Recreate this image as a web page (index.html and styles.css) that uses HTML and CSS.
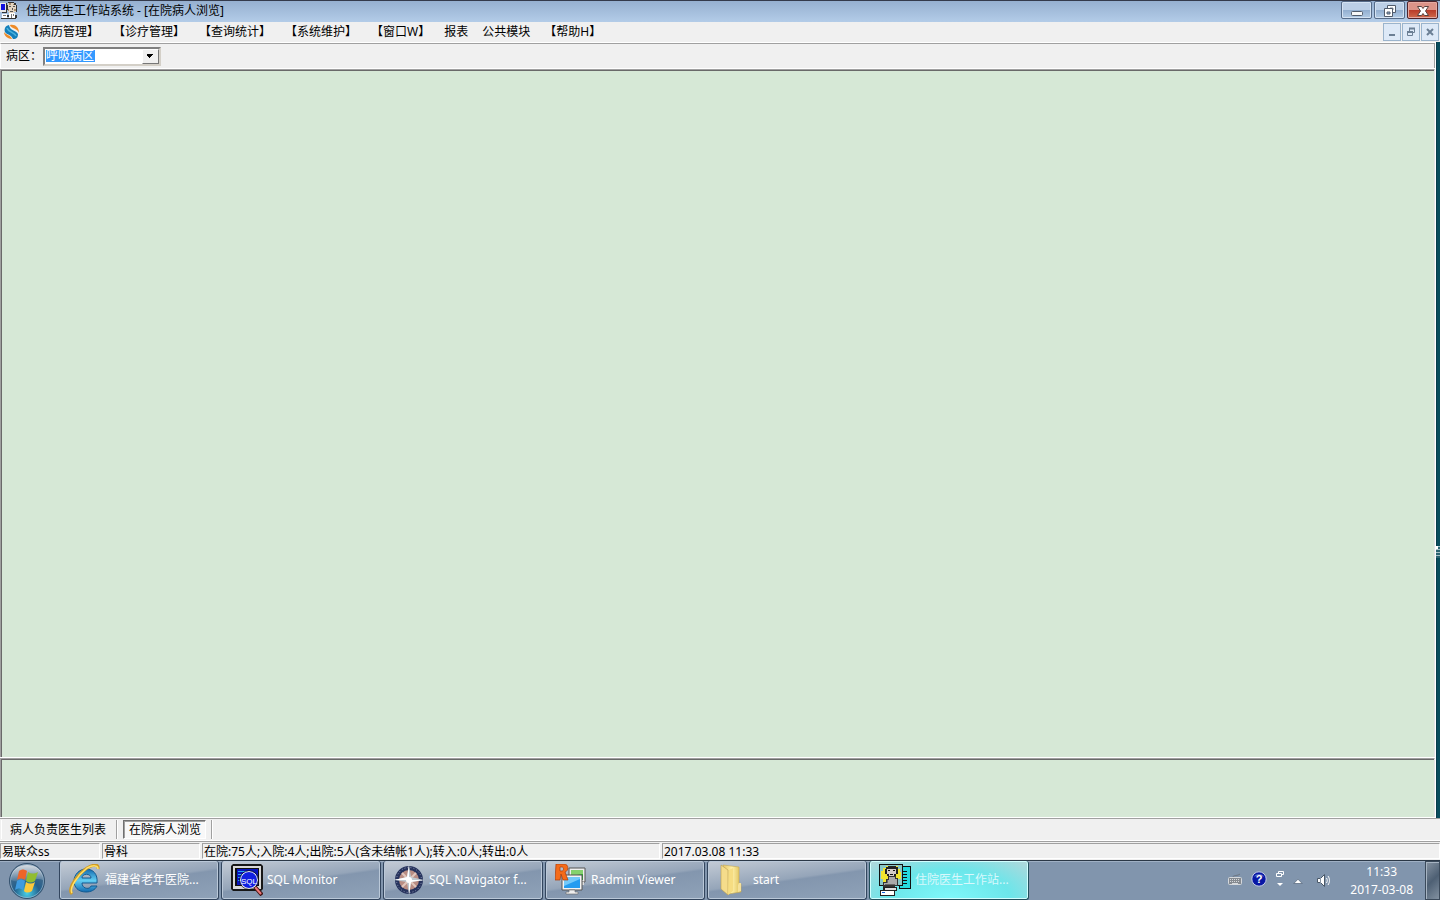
FILE: index.html
```html
<!DOCTYPE html>
<html lang="zh-CN">
<head>
<meta charset="utf-8">
<title>住院医生工作站系统</title>
<link rel="stylesheet" href="styles.css">
</head>
<body>
<header class="titlebar">
  <svg class="app-icon" width="18" height="18" viewBox="0 0 18 18" shape-rendering="crispEdges">
    <path fill="#e8e8e8" d="M0 1h7v9H0z"/><path fill="#1010e0" d="M1 2h4v6H1z"/>
    <path fill="#333" d="M6 1h1v9H6zM2 10h5v1H2zM8 0h6v1H8zM14 1h2v2h-2zM16 3h1v7h-1zM7 3h1v5H7zM1 16h15v1H1zM7 13h2v2H7zM15 13h2v3h-2z"/>
    <path fill="#e3d5c2" d="M8 1h6v2h2v7h-2v3H9v-3H8z"/><path fill="#555" d="M9 4h2v1H9zM13 4h2v1h-2zM12 6h1v2h-1zM10 9h3v1h-3z"/>
    <path fill="#a88d6c" d="M9 1h2v2H9zM13 2h1v1h-1zM8 7h1v2H8zM14 7h2v2h-2z"/>
    <path fill="#fff" d="M2 12h5v4H2zM9 11h6v5H9z"/><path fill="#777" d="M3 13h3v1H3zM11 12h1v4h-1zM13 12h1v2h-1z"/>
  </svg>
  <h1 class="title">住院医生工作站系统 - [在院病人浏览]</h1>
  <div class="window-buttons">
    <button class="win-btn" aria-label="最小化"><svg width="29" height="15" viewBox="0 0 29 15"><rect x="9.500" y="8.500" width="11" height="4" rx="1" fill="#f8f8f8" stroke="#525c6b"/></svg></button>
    <button class="win-btn" aria-label="还原"><svg width="29" height="15" viewBox="0 0 29 15"><path d="M12.500 2.500h8v7h-8z" fill="#fff" stroke="#525c6b"/><path d="M15 5h3v2h-3z" fill="#8fadd0" stroke="#525c6b" stroke-width=".7"/><path d="M9.500 5.500h8v8h-8z" fill="#fff" stroke="#525c6b"/><path d="M12 9h3v2h-3z" fill="#8fadd0" stroke="#525c6b"/></svg></button>
    <button class="win-btn win-close" aria-label="关闭"><svg width="29" height="15" viewBox="0 0 29 15"><path d="M9.500 3.500h4l1.500 2 1.500-2h4l-3 4.500 3 4.500h-4l-1.500-2-1.500 2h-4l3-4.500z" fill="#fff" stroke="#57423f"/></svg></button>
  </div>
</header>
<div class="menubar">
  <svg class="menu-icon" width="16" height="16" viewBox="0 0 16 16">
    <path d="M5 1C1 2 0 5 1 8c2 3 6 2 8 7 4 0 5-2 5-5-2-4-8-3-9-9z" fill="#147fba"/>
    <path d="M6 1c5-1 9 2 9 8-1-3-4-4-6-5C7 3 6 2 6 1z" fill="#ee8b27"/>
    <path d="M0 8c2 3 7 3 8 7-4 0-8-3-8-7z" fill="#ee8b27"/><path d="M3 4c1 4 7 4 9 8" stroke="#4bb2dc" stroke-width="1.500" fill="none"/>
  </svg>
  <nav class="menu">
    <button>【病历管理】</button><button>【诊疗管理】</button><button>【查询统计】</button><button>【系统维护】</button><button>【窗口W】</button><button>报表</button><button>公共模块</button><button>【帮助H】</button>
  </nav>
  <div class="child-buttons">
    <button aria-label="最小化子窗口"><svg width="16" height="16" viewBox="0 0 16 16"><path d="M5 10h6v2H5z" fill="#6b7f94"/></svg></button>
    <button aria-label="还原子窗口"><svg width="16" height="16" viewBox="0 0 16 16" fill="none" stroke="#6b7f94"><path d="M6.500 7V4.500h5v4H10"/><path d="M6 4.500h6M4 8h6" stroke-width="2"/><path d="M4.500 7.500h5v4h-5z"/></svg></button>
    <button aria-label="关闭子窗口"><svg width="16" height="16" viewBox="0 0 16 16"><path d="M5 5l6 6M11 5l-6 6" stroke="#6b7f94" stroke-width="2"/></svg></button>
  </div>
</div>
<div class="workspace">
  <main class="child-window">
    <div class="toolbar">
      <label for="ward">病区：</label>
      <div class="combo">
        <select id="ward"><option>呼吸病区</option></select>
        <svg class="combo-arrow" width="17" height="15" viewBox="0 0 17 15" shape-rendering="crispEdges"><path d="M4 5h7v1H4zM5 6h5v1H5zM6 7h3v1H6zM7 8h1v1H7z"/></svg>
      </div>
    </div>
    <section class="pane patients"></section>
    <section class="pane detail"></section>
  </main>
  <aside class="desktop-edge"><span class="edge-mark"></span></aside>
</div>
<div class="tabs">
  <div class="tab-slot"><button class="tab">病人负责医生列表</button></div>
  <div class="tab-slot"><button class="tab tab-active">在院病人浏览</button></div>
</div>
<footer class="statusbar">
  <span class="cell cell-small">易联众ss</span>
  <span class="cell cell-small">骨科</span>
  <span class="cell cell-wide">在院:75人;入院:4人;出院:5人(含未结帐1人);转入:0人;转出:0人</span>
  <span class="cell cell-rest">2017.03.08 11:33</span>
</footer>
<div class="taskbar">
  <button class="start" aria-label="开始">
    <svg width="38" height="38" viewBox="0 0 38 38">
      <defs>
        <radialGradient id="orb" cx=".5" cy=".85" r=".8"><stop offset="0" stop-color="#48d0e8"/><stop offset=".45" stop-color="#23608c"/><stop offset="1" stop-color="#58718c"/></radialGradient>
        <linearGradient id="shine" x2="0" y2="1"><stop stop-color="#fff" stop-opacity=".75"/><stop offset="1" stop-color="#fff" stop-opacity=".1"/></linearGradient>
      </defs>
      <circle cx="19" cy="19" r="17.500" fill="url(#orb)" stroke="#34516d"/>
      <circle cx="19" cy="19" r="16.500" fill="none" stroke="#a5c3d8" opacity=".6"/>
      <path d="M3 18C3 8 10 3 19 3s16 5 16 15c-9-4-20 5-32 0z" fill="url(#shine)"/>
      <path d="M11 9c3-2 5-2 8 0l-2 9c-3-2-5-2-8 0z" fill="#ee6529"/>
      <path d="M20 10c3 2 6 2 10 0l-3 9c-3 2-6 2-9 0z" fill="#91bd2f"/>
      <path d="M9 19c3-2 5-2 8 0l-2 9c-3-2-5-2-8 0z" fill="#3f9be0"/>
      <path d="M18 20c3 2 6 2 9 0l-3 9c-3 2-6 2-8 0z" fill="#fcc93a"/>
    </svg>
  </button>
  <div class="tasks">
    <button class="task">
      <svg width="32" height="32" viewBox="0 0 32 32">
        <defs><linearGradient id="ie" x2="0" y2="1"><stop stop-color="#1268ae"/><stop offset=".5" stop-color="#62cdf2"/><stop offset="1" stop-color="#126bb1"/></linearGradient></defs>
        <path fill-rule="evenodd" fill="url(#ie)" stroke="#145b91" d="M28 19H13c0 6 8 7 9 3h6c-2 4-6 6-11 6C9 28 5 23 5 17S10 5 17 5s12 5 11 14zM13 14h9c0-5-9-5-9 0z"/>
        <path d="M3 30C-2 25 8 11 18 4c7-4 12-4 11 1" fill="none" stroke="#d19b22" stroke-width="3"/><path d="M3 29C0 24 9 11 18 4c6-3 11-3 11 1" fill="none" stroke="#ffe16b" stroke-width="1.500"/>
      </svg><span>福建省老年医院...</span>
    </button>
    <button class="task">
      <svg width="32" height="32" viewBox="0 0 32 32">
        <path d="M2 0h28l2 2v23l-2 2H2l-2-2V2z" fill="#171717"/><path d="M2 2h28v23H2z" fill="#d8d8d8"/><path d="M4 4h24v18H4z" fill="#111"/><path d="M6 5h21v16H6z" fill="#0613bd"/>
        <path d="M7 7.500h8M7 10.500h7M7 13.500h5M7 16.500h3" stroke="#28a3f2"/><path d="M24 23l7 8" stroke="#431313" stroke-width="4"/><path d="M24 23l6 7" stroke="#ec7979" stroke-width="2"/>
        <circle cx="18" cy="16" r="8.500" fill="#101fe0" stroke="#fff"/><circle cx="18" cy="16" r="9.400" fill="none" stroke="#111" stroke-width=".7"/>
        <text x="18" y="20" class="sql-mark">SQL</text>
      </svg><span>SQL Monitor</span>
    </button>
    <button class="task">
      <svg width="32" height="32" viewBox="0 0 32 32">
        <circle cx="16" cy="16" r="12" fill="#b98d83" stroke="#26335d" stroke-width="4"/><circle cx="16" cy="16" r="12.500" fill="none" stroke="#8c94b4" stroke-dasharray="1 2"/>
        <path d="M9 9l14 14M23 9L9 23" stroke="#e1c7bd" stroke-width="2"/><path d="M16 1l2 12 13 3-13 2-2 13-2-13-13-2 13-3z" fill="#bfc8cf"/><path d="M16 1l-2 12-13 3h15zM31 16l-13 2-2 13V16z" fill="#fff"/><circle cx="16" cy="16" r="3" fill="#fff"/>
      </svg><span>SQL Navigator f...</span>
    </button>
    <button class="task">
      <svg width="32" height="32" viewBox="0 0 32 32">
        <path d="M14 4h16v14H14z" fill="#eee" stroke="#555"/><path d="M16 6h12v10H16z" fill="#28a52f"/><path d="M16 6h12v4l-12 2z" fill="#84d26d"/><path d="M25 18h4v3h-4z" fill="#ddd"/>
        <path d="M7 11h20v15H7z" fill="#f4f4f4" stroke="#555"/><path d="M9 13h16v11H9z" fill="#249cf0"/><path d="M9 13h16v2L9 22z" fill="#73c9fa"/><path d="M14 26h6v2h3v2H11v-2h3z" fill="#eee" stroke="#666" stroke-width=".6"/>
        <path fill-rule="evenodd" d="M1 0h8c5 0 5 7 1 8l3 8H8L6 10l-1 6H0zM5 3v4h2c2 0 2-4 0-4z" fill="#f46b19" stroke="#a93a0a" stroke-width=".7"/>
      </svg><span>Radmin Viewer</span>
    </button>
    <button class="task">
      <svg width="32" height="32" viewBox="0 0 32 32">
        <defs><linearGradient id="fold"><stop stop-color="#e6c567"/><stop offset=".5" stop-color="#fff0a8"/><stop offset="1" stop-color="#dbbd56"/></linearGradient></defs>
        <path d="M6 1l16 2v16l2 1v8l-13 2z" fill="url(#fold)" stroke="#c6a953" stroke-width=".6"/><path d="M22 19h2v8l-3 1v-7z" fill="#f5e19a"/><path d="M4 1l7 5v25l-7-6z" fill="#f5dc8b" stroke="#ba9e4e" stroke-width=".6"/><path d="M12 6l4-2v23l-5 4z" fill="#f6dd82"/>
      </svg><span>start</span>
    </button>
    <button class="task task-active">
      <svg width="32" height="32" viewBox="0 0 32 32" shape-rendering="crispEdges">
        <path d="M20 2h12v23H20z" fill="#111"/><path d="M21 3h10v21H21z" fill="#26dadf"/><path d="M24 7h4v1h-4zM24 10h4v1h-4zM24 13h4v1h-4zM24 16h4v1h-4zM24 19h4v1h-4z" fill="#111"/>
        <path d="M0 0h24v22H0z" fill="#111"/><path d="M1 1h22v20H1z" fill="#88c8c8"/><path d="M2 7h2V4h3V2h12v3h2v3h1v7h-3v3H4v-3H2z" fill="#f1e52e"/>
        <path d="M7 3h2V2h8v1h2v7h-2v2h-2v1h-5v-1H8v-2H6V5h1z" fill="#222"/><path d="M8 5h9v5h-2v2h-5v-2H8z" fill="#d4cdc8"/><path d="M9 6h2v1H9zM14 6h2v1h-2zM11 10h3v1h-3z" fill="#111"/>
        <path d="M9 12h8v2h2v8h-3v4h-3v-3H4v-5h3v-3h2z" fill="#333"/><path d="M10 13h6v2h2v6H5v-2h3v-3h2z" fill="#aaa"/><path d="M8 16h1v3H8zM6 20h10v1H6z" fill="#666"/>
        <path d="M4 23h14v4h-2v5H1v-6h3z" fill="#222"/><path d="M2 27h13v4H2z" fill="#fff"/><path d="M6 24h11v2H6z" fill="#ddd"/><path d="M3 28h3v1H3z" fill="#16d"/>
      </svg><span>住院医生工作站...</span>
    </button>
  </div>
  <div class="tray">
    <div class="tray-icons">
      <svg width="16" height="16" viewBox="0 0 16 16" fill="none" stroke="#d5d8dc"><rect x="1.500" y="6.500" width="13" height="7" rx="1" fill="#858a90"/><path d="M3 8.500h10M3 10.500h10" stroke-dasharray="1 1"/><path d="M5 12.500h6"/><path d="M6 6c0-2 5-1 7-3" stroke="#6c747e"/></svg>
      <svg class="help" width="16" height="16" viewBox="0 0 16 16"><circle cx="8" cy="8" r="7.200" fill="#0817a5" stroke="#c3c9e5"/><path d="M3 6c1-4 9-4 10 0-3-2-6-2-10 0z" fill="#5566c7"/><text x="8" y="12" class="help-mark">?</text></svg>
      <svg class="bar-options" width="10" height="22" viewBox="0 0 10 22" fill="none" stroke="#fff"><path d="M3.500 5V3.500h5v3H7"/><path d="M1.500 5.500h5v3h-5z"/><path d="M2 15h6l-3 3z" fill="#fff" stroke="none"/></svg>
      <svg width="10" height="16" viewBox="0 0 10 16"><path d="M.8 12.500L5 8.200l4.200 4.300z" fill="#fff" stroke="#526378" stroke-width=".7"/></svg>
      <svg class="speaker" width="16" height="16" viewBox="0 0 16 16"><path d="M1.500 7.500h3l4-4v12l-4-4h-3z" fill="#fff" stroke="#4b5968"/><path d="M4.500 7v5" stroke="#8895a4"/><path d="M10.500 7c1 2 1 3 0 5M12 5c2 3 2 6 0 9" fill="none" stroke="#fff"/></svg>
    </div>
    <time class="clock" datetime="2017-03-08T11:33"><span>11:33</span><span>2017-03-08</span></time>
    <button class="show-desktop" aria-label="显示桌面"></button>
  </div>
</div>
</body>
</html>
```
FILE: styles.css
```css
* { box-sizing: border-box; }
body {
  margin: 0;
  height: 100vh;
  display: flex;
  flex-direction: column;
  overflow: hidden;
  background: #f0f0f0;
  color: #000;
  font: 12px/16px "Noto Sans", "Noto Sans CJK SC", sans-serif;
}
button, select { font: inherit; color: inherit; margin: 0; padding: 0; border: 0; background: none; }
svg { display: block; flex: none; }

.titlebar {
  flex: none;
  height: 22px;
  display: flex;
  align-items: center;
  padding-bottom: 1px;
  border-top: 1px solid #343a4b;
  background: linear-gradient(#96b0d0, #b3cce8);
}
.title { margin: 0 0 0 8px; flex: 1; font-size: 12px; font-weight: 400; }
.window-buttons { display: flex; align-self: flex-start; gap: 2px; padding-right: 2px; }
.win-btn {
  width: 31px;
  height: 18px;
  display: grid;
  place-items: center;
  border: 1px solid #566b88;
  border-radius: 2px;
  box-shadow: inset 0 0 0 1px #d4e2f2;
  background: linear-gradient(#bccfe6 48%, #93afd0 52%, #b3cbe5);
}
.win-close { border-color: #50242b; box-shadow: inset 0 0 0 1px #e4aaa2; background: linear-gradient(#dc9388 48%, #b93c2a 52%, #cf6a4c); }

.menubar { flex: none; height: 20px; display: flex; align-items: center; padding: 0 1px 0 4px; }
.menu { display: flex; gap: 14px; flex: 1; margin-left: 7px; padding-bottom: 1px; }
.menu button { white-space: nowrap; }
.child-buttons { display: flex; gap: 1px; }
.child-buttons button {
  width: 18px;
  height: 18px;
  display: grid;
  place-items: center;
  border: 1px solid #9bb4cc;
  background: #dde9f7;
}

.workspace { flex: 1; min-height: 0; display: flex; }
.child-window { flex: 1; display: flex; flex-direction: column; gap: 1px; padding-bottom: 1px; border-top: 1px solid #fff; border-right: 1px solid #fff; background: #fff; }
.toolbar {
  height: 25px;
  display: flex;
  align-items: center;
  padding-left: 5px;
  border-top: 1px solid #a0a0a0;
  border-left: 1px solid #fff;
  border-right: 1px solid #a0a0a0;
  background: #f0f0f0;
}
.toolbar label { width: 37px; white-space: nowrap; }
.combo {
  width: 118px;
  height: 19px;
  position: relative;
  border: 2px solid;
  border-color: #808080 #d4d0c8 #d4d0c8 #808080;
  background: #fff;
}
.combo select {
  display: block;
  width: 100%;
  height: 15px;
  padding-left: 1px;
  appearance: none;
  border-radius: 0;
  color: #fff;
  line-height: 14px;
  background: linear-gradient(#3399ff, #3399ff) 1px 1px / 49px 12px no-repeat #fff;
}
.combo-arrow {
  position: absolute;
  right: 0;
  top: 0;
  pointer-events: none;
  background: #f0f0f0;
  border: 1px solid;
  border-color: #fff #777 #777 #fff;
}
.pane {
  border-top: 1px solid #a0a0a0;
  border-left: 1px solid #a0a0a0;
  border-right: 1px solid #e5e5e5;
  box-shadow: inset 1px 1px #696969;
  background: #d6e8d6;
}
.patients { flex: 1; }
.detail { height: 59px; }
.desktop-edge { position: relative; width: 4px; background: #084d5d; border-left: 1px solid #083c4b; }
.edge-mark { position: absolute; right: 0; top: 504px; width: 4px; height: 12px; background: linear-gradient(90deg, #fff 2px, transparent 2px) 0 0 / 4px 3px no-repeat, repeating-linear-gradient(#a8c2c8 0 1px, #2c6573 1px 3px); }

.tabs { flex: none; height: 23px; display: flex; border-top: 1px solid #a0a0a0; border-bottom: 1px solid #fff; padding: 1px 0 1px 1px; }
.tab-slot { display: flex; padding-right: 5px; border-right: 1px solid #a0a0a0; box-shadow: 1px 0 #fff; border-left: 1px solid #fff; }
.tab-slot + .tab-slot { padding-left: 5px; }
.tab { padding: 0 5px 0 8px; line-height: 18px; white-space: nowrap; }
.tab-active { padding: 0 4px 0 5px; border: 1px solid; border-color: #707070 #fff #fff #707070; box-shadow: inset 1px 1px #a0a0a0; background: #f8f8f8; line-height: 17px; }

.statusbar { flex: none; height: 19px; display: flex; gap: 2px; padding: 1px 0; border-top: 1px solid #a0a0a0; }
.cell { border: 1px solid; border-color: #a0a0a0 #fff #fff #a0a0a0; line-height: 15px; padding-left: 1px; white-space: nowrap; }
.cell-small { width: 100px; }
.cell-small + .cell-small { width: 98px; }
.cell-wide { width: 458px; }
.cell-rest { flex: 1; }

.taskbar { flex: none; height: 40px; display: flex; border-top: 1px solid #2b3847; background: #8195ad; color: #fff; box-shadow: inset 0 1px #9fb0c4; }
.start { width: 59px; padding-left: 8px; }
.tasks { flex: 1; display: flex; gap: 2px; min-width: 0; }
.task {
  width: 160px;
  min-width: 0;
  display: flex;
  align-items: center;
  gap: 4px;
  padding: 0 0 1px 9px;
  border: 1px solid #33465e;
  border-top: 0;
  border-radius: 3px;
  box-shadow: inset 0 0 0 1px #bac8d8;
  background: linear-gradient(172deg, #c4ccd6, #95a5b9 48%, #8396ae 52%, #8fa2b8);
  white-space: nowrap;
}
.task-active { background: radial-gradient(ellipse at 50% 100%, #7ff8fa, #6ce6ea 55%, #b4d6da); box-shadow: inset 0 0 0 1px #d1ffff; border-color: #23505d; color: #d8f8fc; }
.sql-mark { fill: #fff; font: 8px "Liberation Sans", sans-serif; text-anchor: middle; }
.help-mark { fill: #fff; font: bold 11px "Liberation Sans", sans-serif; text-anchor: middle; }
.tray { display: flex; align-items: center; }
.tray-icons { display: flex; align-items: center; gap: 8px; padding-bottom: 4px; }
.tray-icons .speaker { margin-left: 5px; }
.clock { display: flex; flex-direction: column; align-items: center; line-height: 18px; margin: 0 12px 0 18px; }
.show-desktop { width: 15px; align-self: stretch; border: 1px solid #3b4a5b; box-shadow: inset 1px 1px #a7b4c2; background: linear-gradient(135deg, #8693a2, #4e6074 50%, #8291a1); }
```
